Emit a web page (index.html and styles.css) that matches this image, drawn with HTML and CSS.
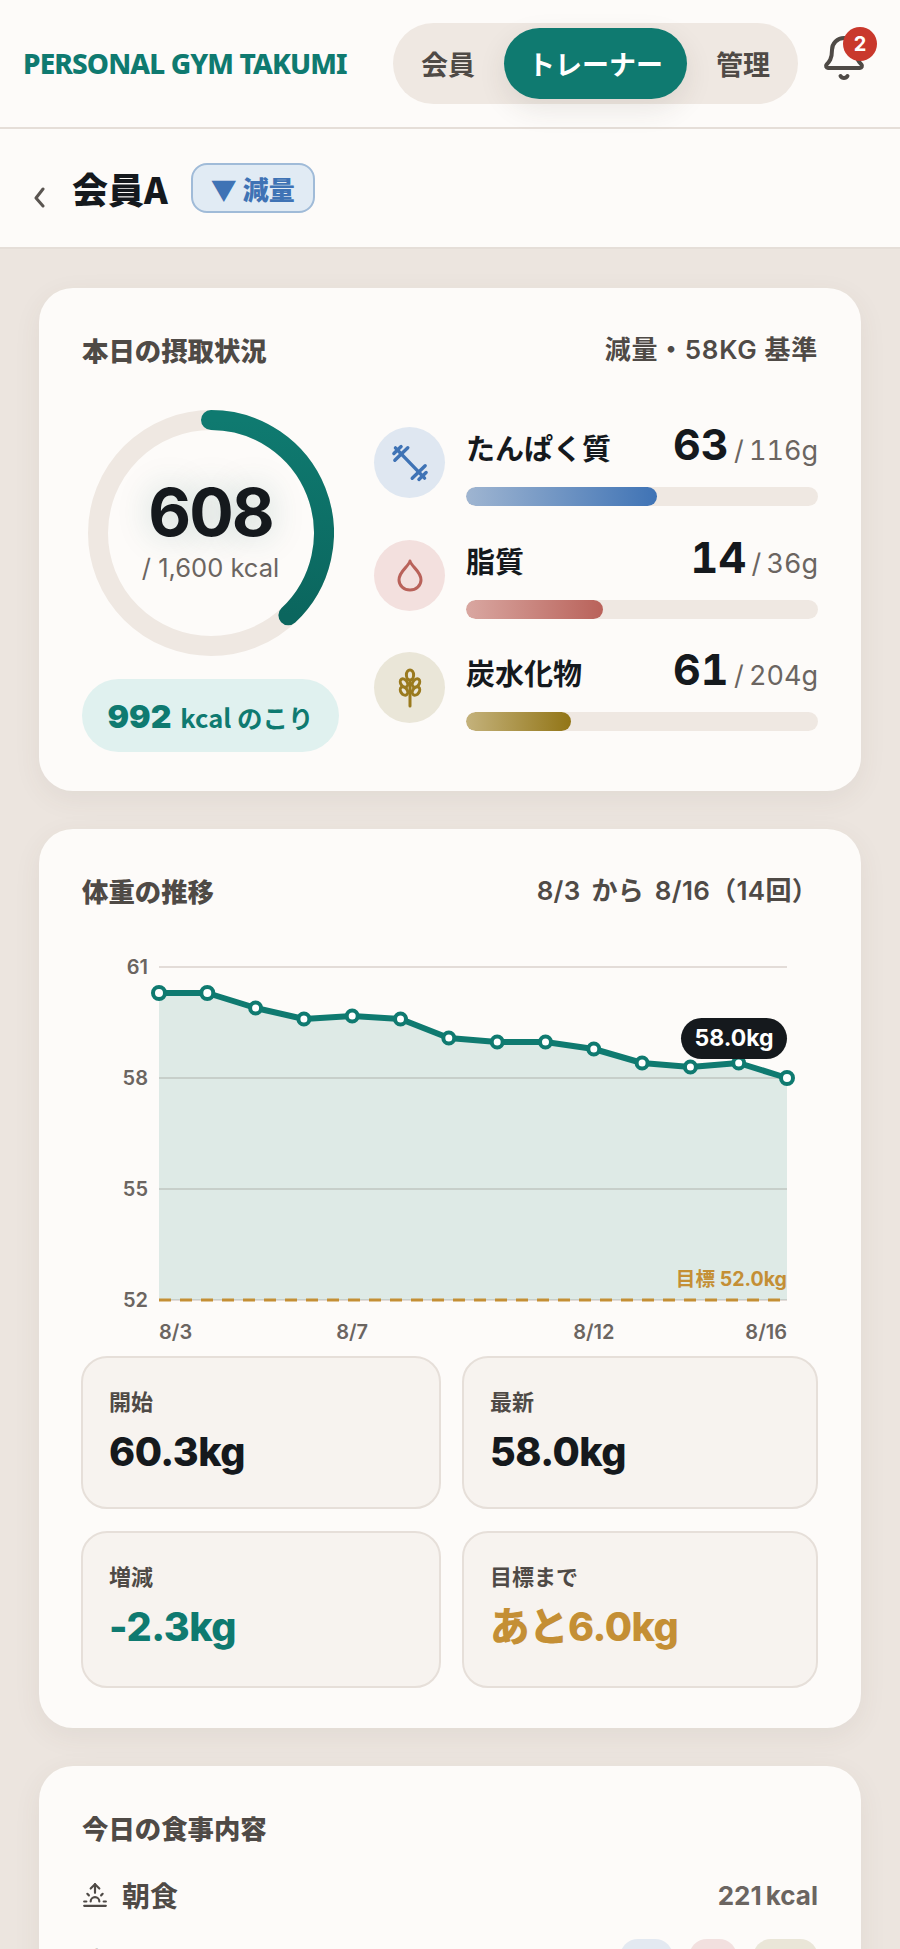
FILE: index.html
```html
<!DOCTYPE html>
<html lang="ja">
  <head>
    <meta charset="UTF-8">
    <meta name="viewport" content="width=device-width, initial-scale=1">
    <title>会員A</title>
    <link rel="stylesheet" href="styles.css">
  </head>
  <body>

    <header class="topbar">
      <div class="logo">PERSONAL GYM TAKUMI</div>
      <nav class="role-nav">
        <a class="role">会員</a>
        <a class="role is-active">トレーナー</a>
        <a class="role">管理</a>
      </nav>
      <div class="bell">
        <svg class="bell-icon" viewBox="0 0 24 24" fill="none" stroke="currentColor" stroke-width="2" stroke-linecap="round" stroke-linejoin="round">
          <path d="M10.268 21a2 2 0 0 0 3.464 0"/>
          <path d="M3.262 15.326A1 1 0 0 0 4 17h16a1 1 0 0 0 .74-1.673C19.41 13.956 18 12.499 18 8A6 6 0 0 0 6 8c0 4.499-1.411 5.956-2.738 7.326"/>
        </svg>
        <span class="bell-badge">2</span>
      </div>
    </header>

    <div class="subhead">
      <svg class="back" viewBox="0 0 12 21" fill="none" stroke="currentColor" stroke-width="3" stroke-linecap="round" stroke-linejoin="round">
        <path d="M10 2 3 11l7 8"/>
      </svg>
      <h1 class="member-name">会員A</h1>
      <span class="goal-tag"><span class="goal-arrow">▼</span>減量</span>
    </div>

    <main class="page">

      <section class="card card-intake">
        <div class="card-head">
          <h2 class="card-title">本日の摂取状況</h2>
          <span class="card-note">減量・58KG 基準</span>
        </div>
        <div class="intake">
          <div class="intake-left">
            <div class="ring">
              <svg class="ring-svg" viewBox="0 0 246 246" fill="none">
                <defs>
                  <linearGradient id="ringGrad" x1="0" y1="0" x2="0" y2="1">
                    <stop offset="0" stop-color="#0f7a70"/>
                    <stop offset="1" stop-color="#0b665e"/>
                  </linearGradient>
                </defs>
                <circle cx="123" cy="123" r="113" stroke="#efe8e2" stroke-width="20"/>
                <path d="M123 10A113 113 0 0 1 200.4 205.3" stroke="url(#ringGrad)" stroke-width="20" stroke-linecap="round"/>
              </svg>
              <div class="ring-text">
                <div class="ring-value">608</div>
                <div class="ring-goal">/ 1,600 kcal</div>
              </div>
            </div>
            <div class="remain"><b>992</b> kcal のこり</div>
          </div>

          <div class="macros">
            <div class="macro">
              <div class="macro-icon macro-icon-p">
                <svg viewBox="-22 -22 44 44" fill="none" stroke="currentColor" stroke-width="3.4" stroke-linecap="round">
                  <g transform="rotate(46)">
                    <path d="M-12 0H12"/>
                    <path d="M-12.5 -9V9M12.5 -9V9"/>
                    <path d="M-18 -5V5M18 -5V5"/>
                    <path d="M-21 0H-12.5M21 0H12.5"/>
                  </g>
                </svg>
              </div>
              <div class="macro-body">
                <div class="macro-head">
                  <span class="macro-name">たんぱく質</span>
                  <span class="macro-nums"><b>63</b> / 116g</span>
                </div>
                <div class="bar"><div class="bar-fill bar-fill-p" style="width: 54.3%"></div></div>
              </div>
            </div>

            <div class="macro">
              <div class="macro-icon macro-icon-f">
                <svg viewBox="-22 -22 44 44" fill="none" stroke="currentColor" stroke-width="3" stroke-linejoin="round">
                  <path d="M0 -14C1.5 -8 11 -4 11 5A11 10 0 0 1 -11 5C-11 -4 -1.500 -8 0 -14Z"/>
                </svg>
              </div>
              <div class="macro-body">
                <div class="macro-head">
                  <span class="macro-name">脂質</span>
                  <span class="macro-nums"><b>14</b> / 36g</span>
                </div>
                <div class="bar"><div class="bar-fill bar-fill-f" style="width: 38.9%"></div></div>
              </div>
            </div>

            <div class="macro">
              <div class="macro-icon macro-icon-c">
                <svg viewBox="-22 -22 44 44" fill="none" stroke="currentColor" stroke-width="3" stroke-linecap="round">
                  <path d="M0 -6V18"/>
                  <ellipse cx="0" cy="-13" rx="3.600" ry="5"/>
                  <ellipse cx="-6" cy="-5" rx="3.200" ry="4.600" transform="rotate(-35 -6 -5)"/>
                  <ellipse cx="6" cy="-5" rx="3.200" ry="4.600" transform="rotate(35 6 -5)"/>
                  <ellipse cx="-6" cy="3" rx="3.200" ry="4.600" transform="rotate(-35 -6 3)"/>
                  <ellipse cx="6" cy="3" rx="3.200" ry="4.600" transform="rotate(35 6 3)"/>
                </svg>
              </div>
              <div class="macro-body">
                <div class="macro-head">
                  <span class="macro-name">炭水化物</span>
                  <span class="macro-nums"><b>61</b> / 204g</span>
                </div>
                <div class="bar"><div class="bar-fill bar-fill-c" style="width: 29.9%"></div></div>
              </div>
            </div>
          </div>
        </div>
      </section>

      <section class="card">
        <div class="card-head">
          <h2 class="card-title">体重の推移</h2>
          <span class="card-note card-note-range">8/3 から 8/16（14回）</span>
        </div>

        <svg class="chart" viewBox="0 1 736 443" fill="none">
          <g class="grid-lines">
            <path d="M77 55H705M77 166H705M77 277H705M77 388H705"/>
          </g>
          <path class="area" d="M77 81L125.300 81 173.600 96 221.900 107 270.200 104 318.500 107 366.800 126 415.200 130 463.500 130 511.800 137 560.100 151 608.400 155 656.700 151 705 166V388H77Z"/>
          <path class="target-line" d="M77 388H705"/>
          <path class="trend" d="M77 81L125.300 81 173.600 96 221.900 107 270.200 104 318.500 107 366.800 126 415.200 130 463.500 130 511.800 137 560.100 151 608.400 155 656.700 151 705 166"/>
          <g class="dots">
            <circle cx="77" cy="81" r="6"/>
            <circle cx="125.300" cy="81" r="6"/>
            <circle cx="173.600" cy="96" r="5.500"/>
            <circle cx="221.900" cy="107" r="5.500"/>
            <circle cx="270.200" cy="104" r="5.500"/>
            <circle cx="318.500" cy="107" r="5.500"/>
            <circle cx="366.800" cy="126" r="5.500"/>
            <circle cx="415.200" cy="130" r="5.500"/>
            <circle cx="463.500" cy="130" r="5.500"/>
            <circle cx="511.800" cy="137" r="5.500"/>
            <circle cx="560.100" cy="151" r="5.500"/>
            <circle cx="608.400" cy="155" r="5.500"/>
            <circle cx="656.700" cy="151" r="5.500"/>
            <circle cx="705" cy="166" r="6"/>
          </g>

          <g class="axis-y">
            <text x="66" y="62">61</text>
            <text x="66" y="173">58</text>
            <text x="66" y="284">55</text>
            <text x="66" y="395">52</text>
          </g>
          <g class="axis-x">
            <text x="77" y="427">8/3</text>
            <text x="270.200" y="427" text-anchor="middle">8/7</text>
            <text x="511.800" y="427" text-anchor="middle">8/12</text>
            <text x="705" y="427" text-anchor="end">8/16</text>
          </g>

          <text class="target-label" x="705" y="374" text-anchor="end">目標 52.0kg</text>

          <rect class="tip" x="599" y="106" width="106" height="41" rx="20.500"/>
          <text class="tip-text" x="652" y="134" text-anchor="middle">58.0kg</text>
        </svg>

        <div class="stats">
          <div class="stat">
            <div class="stat-label">開始</div>
            <div class="stat-value">60.3kg</div>
          </div>
          <div class="stat">
            <div class="stat-label">最新</div>
            <div class="stat-value">58.0kg</div>
          </div>
          <div class="stat">
            <div class="stat-label">増減</div>
            <div class="stat-value stat-value-down">-2.3kg</div>
          </div>
          <div class="stat">
            <div class="stat-label">目標まで</div>
            <div class="stat-value stat-value-goal">あと6.0kg</div>
          </div>
        </div>
      </section>

      <section class="card">
        <div class="card-head">
          <h2 class="card-title">今日の食事内容</h2>
        </div>
        <div class="meal-head">
          <div class="meal-name">
            <svg class="meal-icon" viewBox="0 0 24 24" fill="none" stroke="currentColor" stroke-width="2" stroke-linecap="round" stroke-linejoin="round">
              <path d="M12 2v8"/>
              <path d="m4.930 10.930 1.410 1.410"/>
              <path d="M2 18h2"/>
              <path d="M20 18h2"/>
              <path d="m19.070 10.930-1.410 1.410"/>
              <path d="M22 22H2"/>
              <path d="m8 6 4-4 4 4"/>
              <path d="M16 18a4 4 0 0 0-8 0"/>
            </svg>
            朝食
          </div>
          <div class="meal-kcal">221 kcal</div>
        </div>
        <div class="meal-item">
          <span class="meal-food">オートミール</span>
          <span class="chips">
            <span class="chip chip-p"></span>
            <span class="chip chip-f"></span>
            <span class="chip chip-c"></span>
          </span>
        </div>
      </section>

    </main>

  </body>
</html>
```

FILE: styles.css
```css
:root {
  --clr-paper:  #fdfbf9;
  --clr-page:   #ece5df;
  --clr-line:   #e6dfd9;
  --clr-track:  #efe8e2;
  --clr-ink:    #15191d;
  --clr-text:   #4f4a46;
  --clr-muted:  #6b6561;
  --clr-teal:   #0f7a70;
  --clr-gold:   #c48f35;
  --clr-blue:   #3f73b5;

  --font-cjk:   "Noto Sans CJK JP", sans-serif;
}

html, body {
  margin: 0;
  padding: 0;
  height: 1949px;
  overflow: hidden;
}

*, *::before, *::after {
  box-sizing: border-box;
}

body {
  width: 900px;
  color: var(--clr-text);
  background-color: var(--clr-page);
  font-family: Inter, var(--font-cjk);
}

h1, h2 {
  margin: 0;
  padding: 0;
}


/* Top bar
 *
 */

.topbar {
  display: flex;
  align-items: center;
  height: 129px;
  padding: 0 32px 0 23px;
  background-color: var(--clr-paper);
  border-bottom: solid 2px #e5ded8;
}

.logo {
  margin-top: -2px;
  font-family: "Noto Sans", sans-serif;
  font-size: 28px;
  font-weight: 800;
  letter-spacing: -0.9px;
  color: var(--clr-teal);
  white-space: nowrap;
}

.role-nav {
  display: flex;
  gap: 5px;
  height: 81px;
  margin-left: auto;
  padding: 5px 4px;
  border-radius: 41px;
  background-color: var(--clr-track);
}

.role {
  display: flex;
  align-items: center;
  padding: 0 24px;
  border-radius: 36px;
  font-size: 27px;
  font-weight: 700;
  color: var(--clr-text);
}

.role.is-active {
  color: #fff;
  background-color: var(--clr-teal);
  box-shadow: 0 10px 28px rgba(60, 50, 40, 0.10);
}

.bell {
  position: relative;
  width: 48px;
  height: 48px;
  margin: -11px 0 0 22px;
  color: var(--clr-text);
}

.bell-icon {
  display: block;
  width: 48px;
  height: 48px;
}

.bell-badge {
  position: absolute;
  top: -7px;
  left: 23px;
  display: flex;
  align-items: center;
  justify-content: center;
  width: 34px;
  height: 34px;
  border-radius: 50%;
  font-size: 20px;
  font-weight: 700;
  color: #fff;
  background-color: #c9382c;
}


/* Member line
 *
 */

.subhead {
  display: flex;
  align-items: center;
  height: 120px;
  padding-left: 33px;
  background-color: var(--clr-paper);
  border-bottom: solid 2px #e5ded8;
}

.back {
  width: 12px;
  height: 21px;
  margin-top: 18px;
  color: #5a5551;
}

.member-name {
  margin-left: 27px;
  font-family: var(--font-cjk);
  font-size: 36px;
  font-weight: 900;
  color: var(--clr-ink);
}

.goal-tag {
  display: flex;
  align-items: center;
  height: 50px;
  margin-left: 23px;
  padding: 0 18px;
  border: solid 2px #a0bbd8;
  border-radius: 16px;
  font-family: var(--font-cjk);
  font-size: 26px;
  font-weight: 900;
  color: var(--clr-blue);
  background-color: #e1ebf4;
}

.goal-arrow {
  margin-right: 6px;
}


/* Cards
 *
 */

.page {
  display: flex;
  flex-direction: column;
  gap: 38px;
  padding: 39px 39px 0;
}

.card {
  flex: none;
  padding: 40px 43px;
  border-radius: 34px;
  background-color: var(--clr-paper);
  box-shadow: 0 8px 28px rgba(90, 70, 50, 0.07);
}

.card-intake {
  padding-bottom: 39px;
}

.card-head {
  display: flex;
  justify-content: space-between;
  align-items: center;
  height: 42px;
}

.card-title {
  font-size: 26.4px;
  font-weight: 900;
  color: var(--clr-text);
}

.card-note {
  margin-top: -4px;
  font-size: 26px;
  font-weight: 600;
  letter-spacing: 0.7px;
  color: var(--clr-text);
}

.card-note-range {
  letter-spacing: 0.3px;
  word-spacing: 4px;
}


/* Intake
 *
 */

.intake {
  display: flex;
  gap: 35px;
  margin-top: 40px;
}

.intake-left {
  flex: none;
  display: flex;
  flex-direction: column;
  align-items: center;
  gap: 23px;
  width: 257px;
}

.ring {
  position: relative;
  width: 246px;
  height: 246px;
}

.ring-svg {
  display: block;
  width: 246px;
  height: 246px;
}

.ring-text {
  position: absolute;
  inset: 0 0 6px;
  display: flex;
  flex-direction: column;
  align-items: center;
  justify-content: center;
}

.ring-value {
  font-size: 66px;
  font-weight: 700;
  line-height: 70px;
  letter-spacing: -2px;
  color: var(--clr-ink);
  text-shadow: 0 0 34px rgba(15, 90, 80, 0.22);
}

.ring-goal {
  margin-top: 6px;
  font-size: 25.5px;
  line-height: 30px;
  color: var(--clr-muted);
}

.remain {
  display: flex;
  align-items: baseline;
  justify-content: center;
  gap: 9px;
  width: 100%;
  height: 73px;
  padding-top: 22px;
  border-radius: 37px;
  font-family: var(--font-cjk);
  font-size: 25.5px;
  font-weight: 700;
  line-height: 1;
  color: var(--clr-teal);
  background-color: #e0f1ef;
}

.remain b {
  font-family: Inter, var(--font-cjk);
  font-size: 32px;
}

.macros {
  flex: 1;
  display: flex;
  flex-direction: column;
  gap: 25.5px;
  padding-top: 9px;
}

.macro {
  display: flex;
  align-items: center;
  gap: 21px;
}

.macro-icon {
  flex: none;
  width: 71px;
  height: 71px;
  padding: 13.5px;
  border-radius: 50%;
}

.macro-icon svg {
  display: block;
  width: 44px;
  height: 44px;
}

.macro-icon-p { color: var(--clr-blue); background-color: #dfe7f1; }
.macro-icon-f { color: #b9625a; background-color: #f3e0de; }
.macro-icon-c { color: #9a7a1e; background-color: #eae6d8; }

.macro-body {
  flex: 1;
}

.macro-head {
  display: flex;
  justify-content: space-between;
  align-items: baseline;
  height: 60px;
  line-height: 50px;
}

.macro-name {
  font-size: 29px;
  font-weight: 700;
  color: var(--clr-ink);
}

.macro-nums {
  font-size: 27px;
  font-variant-numeric: tabular-nums;
  word-spacing: -2px;
  color: var(--clr-muted);
}

.macro-nums b {
  font-size: 43px;
  font-weight: 700;
  color: var(--clr-ink);
}

.bar {
  height: 19px;
  margin-top: 8px;
  border-radius: 10px;
  background-color: var(--clr-track);
  overflow: hidden;
}

.bar-fill {
  height: 100%;
  border-radius: 10px;
}

.bar-fill-p { background-image: linear-gradient(to right, #9fb5d1, var(--clr-blue)); }
.bar-fill-f { background-image: linear-gradient(to right, #d9a7a1, #b9625a); }
.bar-fill-c { background-image: linear-gradient(to right, #c4b27c, #927516); }


/* Weight chart
 *
 */

.chart {
  display: block;
  width: 736px;
  height: 443px;
  margin-top: 2px;
}

.grid-lines path {
  stroke: #e3dcd8;
  stroke-width: 2;
}

.area {
  fill: rgba(15, 122, 111, 0.13);
}

.target-line {
  stroke: var(--clr-gold);
  stroke-width: 3;
  stroke-dasharray: 12 9;
}

.trend {
  stroke: var(--clr-teal);
  stroke-width: 6;
  stroke-linejoin: round;
}

.dots circle {
  fill: #fff;
  stroke: var(--clr-teal);
  stroke-width: 4;
}

.axis-y text,
.axis-x text {
  font-size: 20px;
  font-weight: 600;
  fill: var(--clr-muted);
}

.axis-y text {
  text-anchor: end;
}

.target-label {
  font-size: 19.6px;
  font-weight: 700;
  fill: var(--clr-gold);
}

.tip {
  fill: var(--clr-ink);
}

.tip-text {
  font-size: 23px;
  font-weight: 700;
  fill: #fff;
}

.stats {
  display: grid;
  grid-template-columns: 360px 356px;
  grid-template-rows: 153px 157px;
  gap: 22px 21px;
  margin-left: -1px;
}

.stat {
  padding: 29px 26px;
  border: solid 2px var(--clr-line);
  border-radius: 26px;
  background-color: #f7f3ef;
}

.stat-label {
  font-size: 22px;
  line-height: 31px;
  font-weight: 700;
  color: var(--clr-text);
}

.stat-value {
  margin-top: 11px;
  font-size: 39.5px;
  line-height: 46px;
  font-weight: 800;
  letter-spacing: -0.5px;
  color: var(--clr-ink);
}

.stat-value-down { color: var(--clr-teal); }
.stat-value-goal { color: var(--clr-gold); }


/* Meals
 *
 */

.meal-head {
  display: flex;
  justify-content: space-between;
  align-items: center;
  height: 40px;
  margin-top: 27px;
}

.meal-name {
  display: flex;
  align-items: center;
  gap: 14px;
  font-size: 28px;
  font-weight: 700;
  color: var(--clr-text);
}

.meal-icon {
  width: 26px;
  height: 26px;
}

.meal-kcal {
  font-size: 26px;
  font-weight: 700;
  word-spacing: -2px;
  color: var(--clr-muted);
}

.meal-item {
  display: flex;
  justify-content: space-between;
  align-items: center;
  margin-top: 24px;
}

.meal-food {
  font-size: 24px;
  color: var(--clr-text);
}

.chips {
  display: flex;
  gap: 16px;
}

.chip {
  height: 36px;
  border-radius: 18px;
}

.chip-p { width: 53px; background-color: #e3e9f1; }
.chip-f { width: 48px; background-color: #f2e0df; }
.chip-c { width: 65px; background-color: #eae6d8; }
```
